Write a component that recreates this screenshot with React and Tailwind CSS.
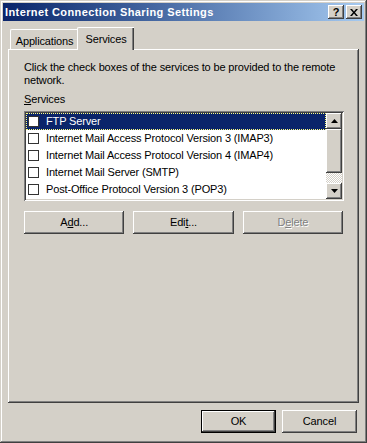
const raised = 'shadow-[inset_-1px_-1px_#404040,inset_1px_1px_#ffffff,inset_-2px_-2px_#808080]'

function Btn({ children, className = '', isDefault = false }) {
  if (isDefault) {
    return (
      <div className={`border border-black ${className}`}>
        <div className={`h-full w-full flex items-center justify-center bg-[#d4d0c8] ${raised}`}>{children}</div>
      </div>
    )
  }
  return (
    <div className={`flex items-center justify-center bg-[#d4d0c8] ${raised} ${className}`}>{children}</div>
  )
}

function Arrow({ up }) {
  return (
    <div className={`h-[16px] w-[16px] flex items-center justify-center bg-[#d4d0c8] ${raised}`}>
      <svg width="7" height="4" viewBox="0 0 7 4">
        {up ? <path d="M3.5 0 L7 4 L0 4 Z" fill="#000" /> : <path d="M0 0 L7 0 L3.5 4 Z" fill="#000" />}
      </svg>
    </div>
  )
}

const services = [
  'FTP Server',
  'Internet Mail Access Protocol Version 3 (IMAP3)',
  'Internet Mail Access Protocol Version 4 (IMAP4)',
  'Internet Mail Server (SMTP)',
  'Post-Office Protocol Version 3 (POP3)',
]

export default function App() {
  return (
    <div
      className="w-[367px] h-[443px] bg-[#d4d0c8] p-[3px] flex flex-col text-[11px] leading-[13px] tracking-[-0.15px] text-black shadow-[inset_-1px_-1px_#404040,inset_1px_1px_#d4d0c8,inset_-2px_-2px_#808080,inset_2px_2px_#ffffff]"
      style={{ fontFamily: '"Liberation Sans", Arial, sans-serif' }}
    >
      <div className="h-[18px] flex items-center justify-between bg-linear-to-r from-[#0a246a] to-[#a6caf0] pl-[2px] pr-[2px]">
        <span className="font-bold text-white text-[11px] tracking-[0.4px]">Internet Connection Sharing Settings</span>
        <div className="flex gap-[2px]">
          <div className={`h-[14px] w-[16px] flex items-center justify-center bg-[#d4d0c8] ${raised} font-bold text-[11px] leading-none`}>?</div>
          <div className={`h-[14px] w-[16px] flex items-center justify-center bg-[#d4d0c8] ${raised}`}>
            <svg width="8" height="7" viewBox="0 0 8 7">
              <path d="M0 0h2l2 2.5L6 0h2L5 3.5 8 7H6L4 4.5 2 7H0l3-3.5z" fill="#000" />
            </svg>
          </div>
        </div>
      </div>

      <div className="px-[5px] pt-[6px] flex flex-col">
        <div className="flex items-end h-[22px] pl-[2px] relative z-10">
          <div className="h-[20px] w-[68px] border-l border-t border-white rounded-tl-[2px] shadow-[inset_-1px_0_#808080] flex items-center justify-center pt-[3px]">
            Applications
          </div>
          <div className="h-[23px] w-[57px] -ml-[1px] -mb-px bg-[#d4d0c8] border-l border-t border-white rounded-tl-[2px] shadow-[inset_-1px_0_#404040,inset_-2px_0_#808080] flex items-center justify-center">
            Services
          </div>
        </div>

        <div className="h-[354px] shadow-[inset_-1px_-1px_#404040,inset_1px_1px_#ffffff,inset_-2px_-2px_#808080] pl-[16px] pt-[12px] flex flex-col">
          <p className="w-[330px]">Click the check boxes of the services to be provided to the remote<br />network.</p>
          <div className="mt-[6px]"><span className="underline">S</span>ervices</div>

          <div className="mt-[5px] w-[320px] h-[90px] bg-white p-[2px] flex shadow-[inset_1px_1px_#808080,inset_-1px_-1px_#ffffff,inset_2px_2px_#404040,inset_-2px_-2px_#d4d0c8]">
            <div className="flex-1 flex flex-col">
              {services.map((s, i) => (
                <div
                  key={s}
                  className={`h-[17px] flex items-center pl-[2px] ${i === 0 ? 'bg-[#0a246a] text-white outline-1 outline-dotted outline-[#ffff80] -outline-offset-1' : ''}`}
                >
                  <div className="w-[11px] h-[11px] bg-white border border-[#333]" />
                  <span className="ml-[7px]">{s}</span>
                </div>
              ))}
            </div>
            <div className="w-[16px] flex flex-col">
              <Arrow up />
              <div className={`h-[44px] bg-[#d4d0c8] ${raised}`} />
              <div className="flex-1 bg-[repeating-conic-gradient(#ffffff_0_25%,#d4d0c8_0_50%)] bg-size-[2px_2px]" />
              <Arrow />
            </div>
          </div>

          <div className="mt-[10px] w-[319px] grid grid-cols-3 gap-[9px]">
            <Btn className="h-[23px]">A<span className="underline">d</span>d...</Btn>
            <Btn className="h-[23px]">Edi<span className="underline">t</span>...</Btn>
            <Btn className="h-[23px] text-[#808080] [text-shadow:1px_1px_#ffffff]">D<span className="underline">e</span>lete</Btn>
          </div>
        </div>

        <div className="flex justify-end gap-[6px] mt-[7px] pr-[2px]">
          <Btn isDefault className="h-[23px] w-[75px]">OK</Btn>
          <Btn className="h-[23px] w-[75px]">Cancel</Btn>
        </div>
      </div>
    </div>
  )
}
